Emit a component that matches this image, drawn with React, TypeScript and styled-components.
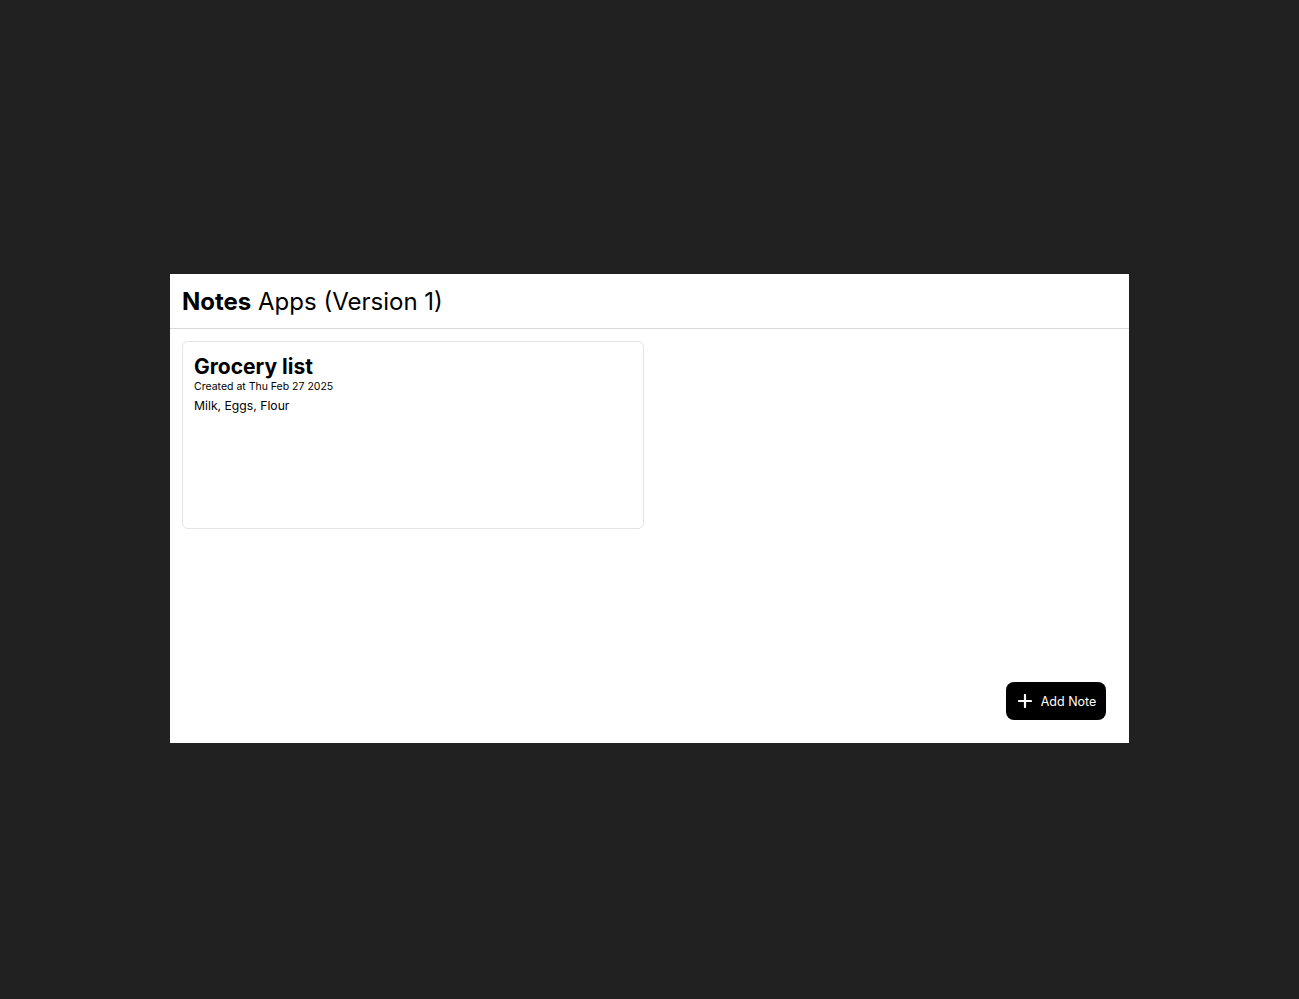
import React from "react";
import styled, { createGlobalStyle } from "styled-components";

const GlobalStyle = createGlobalStyle`
  html, body { margin: 0; padding: 0; background: #212121; }
  body { font-family: Inter, "Noto Sans", sans-serif; color: #000; }
  * { box-sizing: border-box; }
`;

const Page = styled.div`
  min-height: 100vh;
  display: flex;
  align-items: center;
  justify-content: center;
  padding-top: 18px;
`;

const Panel = styled.div`
  position: relative;
  width: 959px;
  height: 469px;
  background: #fff;
  display: flex;
  flex-direction: column;
`;

const Header = styled.header`
  height: 55px;
  display: flex;
  align-items: center;
  padding: 1px 12px 0;
  border-bottom: 1px solid #d9d9d9;
`;

const Title = styled.h1`
  margin: 0;
  font-size: 24px;
  font-weight: 400;
  line-height: 1;
  b { font-weight: 700; }
`;

const Grid = styled.main`
  display: grid;
  grid-template-columns: repeat(2, 1fr);
  gap: 12px;
  padding: 12px;
  align-content: start;
`;

const Card = styled.article`
  height: 188px;
  border: 1px solid #e4e4e4;
  border-radius: 6px;
  padding: 11px 11px;
  display: flex;
  flex-direction: column;
`;

const CardTitle = styled.h2`
  margin: 0;
  font-size: 21px;
  font-weight: 700;
  line-height: 27px;
`;

const Meta = styled.div`
  font-size: 10.5px;
  line-height: 13px;
`;

const Body = styled.p`
  margin: 5px 0 0;
  font-size: 12.2px;
  line-height: 16px;
`;

const AddButton = styled.button`
  position: absolute;
  right: 23px;
  bottom: 23px;
  width: 100px;
  height: 38px;
  border: none;
  border-radius: 8px;
  background: #000;
  color: #fff;
  display: flex;
  align-items: center;
  justify-content: center;
  gap: 9px;
  padding: 0 0 0 2px;
  font-family: Inter, "Noto Sans", sans-serif;
  font-size: 12.5px;
  cursor: pointer;
`;

const PlusIcon = () => (
  <svg width="14" height="14" viewBox="0 0 14 14" aria-hidden="true">
    <path d="M7 1v12M1 7h12" stroke="#fff" strokeWidth="2.2" strokeLinecap="round" />
  </svg>
);

export default function App() {
  return (
    <>
      <GlobalStyle />
      <Page>
        <Panel>
          <Header>
            <Title>
              <b>Notes</b> Apps (Version 1)
            </Title>
          </Header>
          <Grid>
            <Card>
              <CardTitle>Grocery list</CardTitle>
              <Meta>Created at Thu Feb 27 2025</Meta>
              <Body>Milk, Eggs, Flour</Body>
            </Card>
          </Grid>
          <AddButton>
            <PlusIcon />
            Add Note
          </AddButton>
        </Panel>
      </Page>
    </>
  );
}
